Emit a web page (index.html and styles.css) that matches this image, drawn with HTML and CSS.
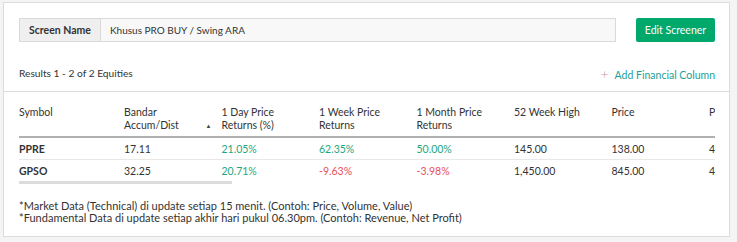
FILE: index.html
```html
<!DOCTYPE html>
<html lang="id">
<head>
    <meta charset="UTF-8">
    <title>Screener</title>
    <link rel="stylesheet" href="styles.css">
</head>
<body>

<div class="card">
    <div class="top">
        <div class="name-box">
            <div class="name-label">Screen Name</div>
            <div class="name-value">Khusus PRO BUY / Swing ARA</div>
        </div>
        <button class="btn-edit">Edit Screener</button>
    </div>

    <div class="results">
        <span class="count">Results 1 - 2 of 2 Equities</span>
        <a class="add-col"><span class="plus">+</span>Add Financial Column</a>
    </div>

    <div class="table-wrap">
        <table>
            <colgroup>
                <col class="w-sym">
                <col span="22" class="w-col">
            </colgroup>
            <thead>
                <tr>
                    <th>Symbol</th>
                    <th class="sorted">Bandar<br>Accum/Dist<span class="arrow">&#9650;</span></th>
                    <th>1 Day Price<br>Returns (%)</th>
                    <th>1 Week Price<br>Returns</th>
                    <th>1 Month Price<br>Returns</th>
                    <th>52 Week High</th>
                    <th>Price</th>
                    <th>PER</th>
                    <th>PBV</th>
                    <th>Volume</th>
                    <th>Value</th>
                    <th>Market Cap</th>
                    <th>Frequency</th>
                    <th>52 Week Low</th>
                    <th>Revenue</th>
                    <th>Net Profit</th>
                    <th>EPS</th>
                    <th>ROE</th>
                    <th>DER</th>
                    <th>Dividend Yield</th>
                    <th>Foreign Flow</th>
                    <th>Sector</th>
                    <th>Sub Sector</th>
                </tr>
            </thead>
            <tbody>
                <tr>
                    <td class="c-sym">PPRE</td>
                    <td>17.11</td>
                    <td class="up">21.05%</td>
                    <td class="up">62.35%</td>
                    <td class="up">50.00%</td>
                    <td>145.00</td>
                    <td>138.00</td>
                    <td>4.21</td>
                    <td>0.62</td>
                    <td>1.2M</td>
                    <td>165.3B</td>
                    <td>1.4T</td>
                    <td>8,120</td>
                    <td>58.00</td>
                    <td>2.1T</td>
                    <td>310.2B</td>
                    <td>32.78</td>
                    <td>14.8%</td>
                    <td>1.12</td>
                    <td>0.00%</td>
                    <td>2.3B</td>
                    <td>Property</td>
                    <td>Building</td>
                </tr>
                <tr>
                    <td class="c-sym">GPSO</td>
                    <td>32.25</td>
                    <td class="up">20.71%</td>
                    <td class="down">-9.63%</td>
                    <td class="down">-3.98%</td>
                    <td>1,450.00</td>
                    <td>845.00</td>
                    <td>4.87</td>
                    <td>1.05</td>
                    <td>3.4M</td>
                    <td>2.9B</td>
                    <td>711.2B</td>
                    <td>1,904</td>
                    <td>232.00</td>
                    <td>402.7B</td>
                    <td>146.0B</td>
                    <td>173.5</td>
                    <td>21.6%</td>
                    <td>0.38</td>
                    <td>1.20%</td>
                    <td>-0.4B</td>
                    <td>Industrial</td>
                    <td>Machinery</td>
                </tr>
            </tbody>
        </table>
    </div>
    <div class="scroll-track"><div class="scroll-thumb"></div></div>

    <div class="notes">
        *Market Data (Technical) di update setiap 15 menit. (Contoh: Price, Volume, Value)<br>
        *Fundamental Data di update setiap akhir hari pukul 06.30pm. (Contoh: Revenue, Net Profit)
    </div>
</div>

</body>
</html>
```

FILE: styles.css
```css
body {
  margin: 0;
  padding: 2px 7px 5px 3px;
  background: #f4f4f4;
  font-family: Lato, "Open Sans", sans-serif;
  font-size: 10.5px;
  color: #333;
}
.card {
  background: #fff;
  border: 1px solid #dcdcdc;
  height: 235px;
  box-sizing: border-box;
}
.top {
  display: flex;
  align-items: center;
  gap: 20px;
  padding: 15px 14px 0 15px;
}
.name-box {
  flex: 1;
  display: flex;
  height: 24px;
  border: 1px solid #d9d9d9;
  box-sizing: border-box;
}
.name-label {
  background: #efefef;
  border-right: 1px solid #d9d9d9;
  padding: 0 9px;
  display: flex;
  align-items: center;
  font-weight: bold;
  color: #333;
}
.name-value {
  flex: 1;
  background: #f8f8f8;
  padding: 0 9px;
  display: flex;
  align-items: center;
  font-size: 10px;
}
.btn-edit {
  background: #00a86b;
  color: #fff;
  border: none;
  border-radius: 2px;
  height: 24px;
  width: 79px;
  font-family: inherit;
  font-size: 10.5px;
  padding: 0;
}
.results {
  display: flex;
  justify-content: space-between;
  align-items: center;
  box-sizing: border-box;
  height: 50px;
  padding: 13px 14px 0 15px;
  border-bottom: 1px solid #dcdcdc;
}
.count {
  font-size: 10.2px;
}
.add-col {
  color: #1a9f9a;
}
.plus {
  color: #c4949e;
  font-size: 14px;
  font-weight: 300;
  margin-right: 6px;
}
.table-wrap {
  margin: 0 14px 0 15px;
  overflow: hidden;
  padding-top: 14px;
}
table {
  border-collapse: collapse;
  width: 2250px;
  table-layout: fixed;
}
.w-sym {
  width: 105px;
}
.w-col {
  width: 97.5px;
}
th {
  font-weight: normal;
  text-align: left;
  vertical-align: top;
  line-height: 13px;
  padding: 0 0 4px 0;
  border-bottom: 2px solid #b0b0b0;
  white-space: nowrap;
}
th.sorted {
  position: relative;
}
.arrow {
  position: absolute;
  right: 10px;
  bottom: 4px;
  font-size: 6px;
  color: #444;
}
td {
  padding: 0;
  height: 21px;
  border-bottom: 1px solid #e8e8e8;
  white-space: nowrap;
}
tbody tr:last-child td {
  border-bottom: none;
}
td.c-sym {
  font-weight: bold;
}
.up {
  color: #1ea77b;
}
.down {
  color: #e8505b;
}
.scroll-track {
  margin: 0 14px 0 15px;
  height: 3px;
}
.scroll-thumb {
  width: 213px;
  height: 3px;
  background: #dcdcdc;
}
.notes {
  padding: 16px 15px 0;
  line-height: 12px;
  font-size: 11px;
}
```
